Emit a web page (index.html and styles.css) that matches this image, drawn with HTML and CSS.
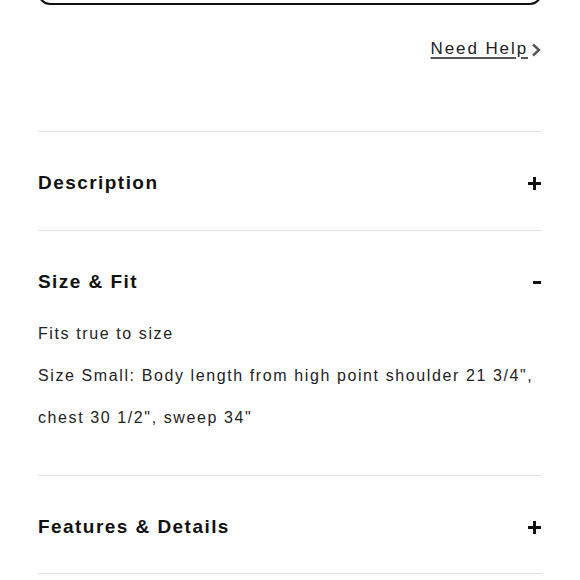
FILE: index.html
```html
<!DOCTYPE html>
<html lang="en">
<head>
<meta charset="utf-8">
<title>Product details</title>
<link rel="stylesheet" href="styles.css">
</head>
<body>
<div class="page">
  <div class="top-button"></div>
  <div class="help-row">
    <a class="help-link" href="#">Need Help</a>
    <svg class="chev" width="10" height="14" viewBox="0 0 10 14"><polyline points="2,1.5 8,7 2,12.5" fill="none" stroke="#555" stroke-width="2.4"/></svg>
  </div>
  <div class="accordion">
    <section class="item">
      <div class="item-head">
        <h2 class="item-title">Description</h2>
        <svg class="icon-plus" width="13" height="13" viewBox="0 0 13 13"><rect x="5" y="0" width="3" height="13" fill="#111"/><rect x="0" y="5" width="13" height="3" fill="#111"/></svg>
      </div>
    </section>
    <section class="item open">
      <div class="item-head">
        <h2 class="item-title">Size &amp; Fit</h2>
        <svg class="icon-minus" width="8" height="3" viewBox="0 0 8 3"><rect x="0" y="0" width="8" height="3" fill="#111"/></svg>
      </div>
      <div class="item-body">
        <p>Fits true to size</p>
        <p>Size Small: Body length from high point shoulder 21 3/4",<br>chest 30 1/2", sweep 34"</p>
      </div>
    </section>
    <section class="item">
      <div class="item-head last-head">
        <h2 class="item-title">Features &amp; Details</h2>
        <svg class="icon-plus" width="13" height="13" viewBox="0 0 13 13"><rect x="5" y="0" width="3" height="13" fill="#111"/><rect x="0" y="5" width="13" height="3" fill="#111"/></svg>
      </div>
    </section>
  </div>
</div>
</body>
</html>
```

FILE: styles.css
```css
html, body {
  margin: 0;
  padding: 0;
  background: #fff;
}
body {
  font-family: "Liberation Sans", Arial, Helvetica, sans-serif;
  color: #222;
}
.page {
  padding: 0 38px;
}
.top-button {
  height: 48px;
  margin-top: -47px;
  border: 2px solid #111;
  border-radius: 12px;
}
.help-row {
  margin-top: 34px;
  height: 20px;
  display: flex;
  justify-content: flex-end;
  align-items: center;
  gap: 3px;
  padding-right: 1px;
}
.help-link {
  font-size: 17px;
  line-height: 20px;
  letter-spacing: 1.9px;
  color: #222;
  text-decoration: underline;
  text-decoration-color: #555;
  text-underline-offset: 3px;
  text-decoration-thickness: 1.5px;
}
.chev {
  display: block;
  margin-top: 1px;
}
.accordion {
  margin-top: 72px;
}
.item {
  border-top: 1px solid #e2e2e2;
}
.item:last-child {
  border-bottom: 1px solid #e2e2e2;
}
.item-head {
  display: flex;
  justify-content: space-between;
  align-items: center;
  padding: 40px 1px 36px 0;
}
.item-head.last-head {
  padding-bottom: 35px;
}
.item.open .item-head {
  padding-bottom: 0;
}
.item-title {
  margin: 0;
  font-size: 19px;
  line-height: 22px;
  font-weight: 700;
  letter-spacing: 1.45px;
  color: #111;
}
.icon-plus, .icon-minus {
  display: block;
}
.item-body {
  padding: 20px 0 36px;
}
.item-body p {
  margin: 0;
  font-size: 16px;
  line-height: 42px;
  letter-spacing: 1.6px;
  color: #222;
}
```
